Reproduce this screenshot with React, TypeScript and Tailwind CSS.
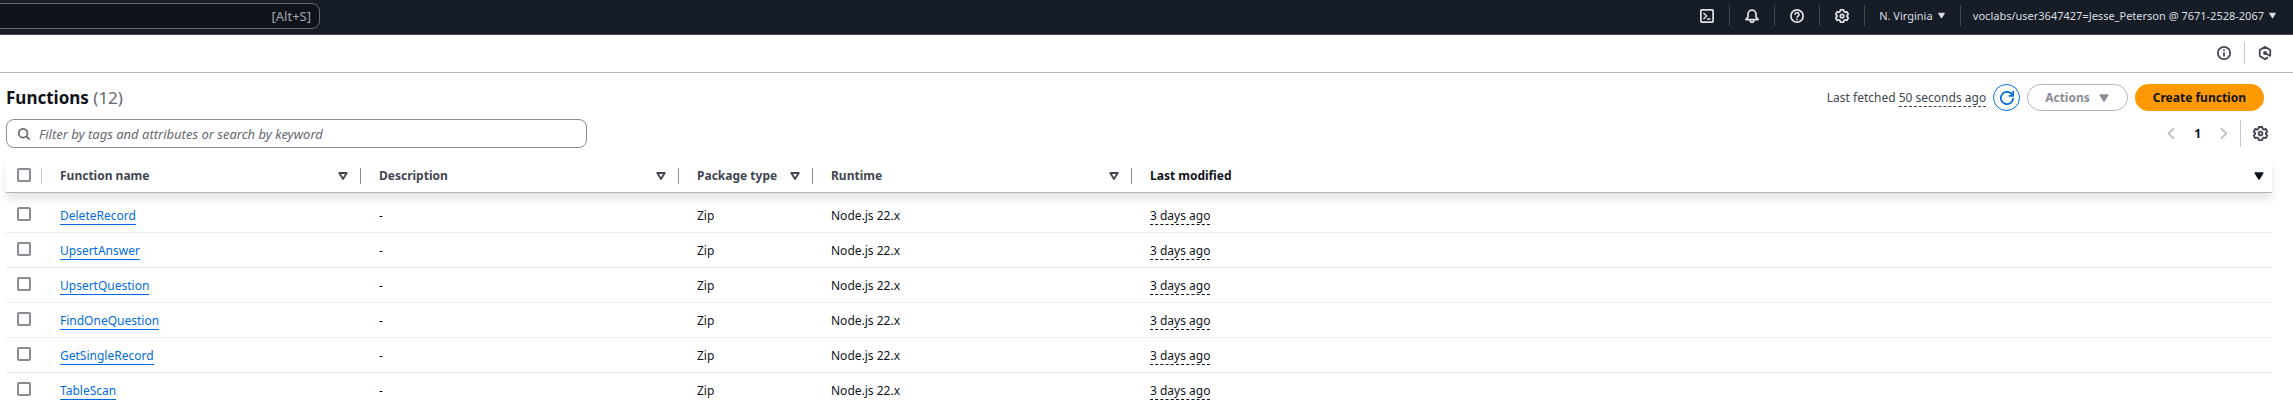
import React from "react";

type IconProps = { className?: string };

const iconBase = {
  viewBox: "0 0 16 16",
  fill: "none",
  stroke: "currentColor",
  strokeWidth: 2,
  "aria-hidden": true,
} as const;

function ShellIcon({ className }: IconProps) {
  return (
    <svg {...iconBase} className={className}>
      <rect x="1" y="1" width="14" height="14" rx="1" strokeLinejoin="round" />
      <path d="M4 4.5 7.5 8 4 11.5M8 11.5h4" strokeWidth="1.7" />
    </svg>
  );
}

function BellIcon({ className }: IconProps) {
  return (
    <svg {...iconBase} className={className}>
      <path d="M3.5 9V5.8a4.5 4.5 0 0 1 9 0V9L15 12H1L3.5 9Z" strokeLinejoin="round" />
      <path d="M6 12.5V13a2 2 0 0 0 4 0v-.5" />
    </svg>
  );
}

function HelpIcon({ className }: IconProps) {
  return (
    <svg {...iconBase} className={className}>
      <circle cx="8" cy="8" r="7" />
      <path d="M5.7 6.6A2.3 2.2 0 1 1 9 8.3c-.7.4-1 .8-1 1.7" strokeWidth="1.8" />
      <path d="M8 11v1.8" strokeWidth="1.8" />
    </svg>
  );
}

function GearIcon({ className }: IconProps) {
  return (
    <svg {...iconBase} className={className}>
      <path
        d="M6.2 1h3.6l.5 2 1.4.8 2-.6 1.5 2.9L13.8 7.4v1.3l1.4 1.3-1.5 2.9-2-.6-1.4.8-.5 1.9H6.2l-.5-1.9-1.4-.8-2 .6L.8 10l1.4-1.3V7.4L.8 6.1l1.5-2.9 2 .6L5.7 3l.5-2Z"
        strokeLinejoin="round"
      />
      <circle cx="8" cy="8" r="2" />
    </svg>
  );
}

function InfoIcon({ className }: IconProps) {
  return (
    <svg {...iconBase} className={className}>
      <circle cx="8" cy="8" r="7" />
      <path d="M8 7v5M8 4v1.8" />
    </svg>
  );
}

function HexIcon({ className }: IconProps) {
  return (
    <svg {...iconBase} className={className}>
      <path d="M11.5 13 8 15l-6-3.5v-7L8 1l6 3.5v7" strokeLinejoin="round" />
      <path d="m8 8 6.5 3.8" />
      <circle cx="8" cy="8" r="2.2" fill="currentColor" stroke="none" />
    </svg>
  );
}

function SearchIcon({ className }: IconProps) {
  return (
    <svg {...iconBase} className={className}>
      <circle cx="7" cy="7" r="5" />
      <path d="m10.5 10.5 4 4" />
    </svg>
  );
}

function RefreshIcon({ className }: IconProps) {
  return (
    <svg {...iconBase} className={className}>
      <path d="M15 8a7 7 0 1 1-2-4.9L15 5" />
      <path d="M15 0v5.6h-5" />
    </svg>
  );
}

function ChevronIcon({ className, left }: IconProps & { left?: boolean }) {
  return (
    <svg {...iconBase} className={className}>
      <path d={left ? "m11 1.5-6.5 6.5 6.5 6.5" : "m5 1.5 6.5 6.5-6.5 6.5"} />
    </svg>
  );
}

function CaretIcon({ className, outline }: IconProps & { outline?: boolean }) {
  return (
    <svg {...iconBase} className={className}>
      <path
        d="M3 4h10l-5 8-5-8Z"
        fill={outline ? "none" : "currentColor"}
        strokeWidth={outline ? 2.4 : 2}
        strokeLinejoin="round"
      />
    </svg>
  );
}

const topActions = [
  { label: "CloudShell", Icon: ShellIcon },
  { label: "Notifications", Icon: BellIcon },
  { label: "Support", Icon: HelpIcon },
  { label: "Settings", Icon: GearIcon },
];

const columns = [
  { label: "Function name", width: "w-[319px]" },
  { label: "Description", width: "w-[318px]" },
  { label: "Package type", width: "w-[134px]" },
  { label: "Runtime", width: "w-[319px]" },
  { label: "Last modified", width: "", sorted: true },
];

const functionNames = [
  "DeleteRecord",
  "UpsertAnswer",
  "UpsertQuestion",
  "FindOneQuestion",
  "GetSingleRecord",
  "TableScan",
];

function Checkbox({ label }: { label: string }) {
  return (
    <input
      type="checkbox"
      aria-label={label}
      className="block size-[14px] appearance-none rounded-[2px] border-2 border-[#8c8c94] bg-white checked:bg-[#006ce0]"
    />
  );
}

export default function App() {
  return (
    <div className="bg-white font-['Noto_Sans',sans-serif] text-[12px] leading-[18px] text-[#0f141a]">
      <header className="flex h-[35px] items-center justify-between border-b border-[#424650] bg-[#161d26] text-[11px] text-[#dedee3]">
        <label className="-ml-px mb-[2px] flex h-[26px] w-[321px] items-center rounded-r-[8px] border border-[#656871] bg-[#0f141a] pr-2">
          <input
            type="search"
            aria-label="Search"
            className="min-w-0 flex-1 bg-transparent outline-none"
          />
          <span className="text-[13px] text-[#a4a4ad]">[Alt+S]</span>
        </label>
        <nav className="mb-[3px] flex items-center pr-4">
          {topActions.map(({ label, Icon }) => (
            <button
              key={label}
              aria-label={label}
              className="flex h-[21px] w-[45px] items-center justify-center border-r border-[#424650]"
            >
              <Icon className="size-[14px]" />
            </button>
          ))}
          <button className="flex h-[21px] w-24 items-center justify-center gap-1 border-r border-[#424650]">
            N. Virginia
            <CaretIcon className="size-[9px]" />
          </button>
          <button className="flex h-[21px] items-center gap-1 pl-3">
            voclabs/user3647427=Jesse_Peterson @ 7671-2528-2067
            <CaretIcon className="size-[9px]" />
          </button>
        </nav>
      </header>

      <div className="flex h-[38px] items-center justify-end border-b border-[#b4b4bb] pr-[21px] pb-[2px] text-[#424650]">
        <button
          aria-label="Info"
          className="flex h-[22px] items-center border-r border-[#c6c6cd] pr-[13px]"
        >
          <InfoIcon className="size-[14px]" />
        </button>
        <button aria-label="Assistant" className="pl-[13px]">
          <HexIcon className="size-[14px]" />
        </button>
      </div>

      <main className="pr-[21px] pl-[6px]">
        <div className="flex items-center justify-between pt-[11px] pr-2">
          <h1 className="text-[17px] leading-[26px] font-bold">
            Functions <span className="font-normal text-[#656871]">(12)</span>
          </h1>
          <div className="flex items-center gap-[7px]">
            <p className="text-[#424650]">
              Last fetched{" "}
              <span className="border-b border-dashed border-[#424650]">50 seconds ago</span>
            </p>
            <button
              aria-label="Refresh"
              className="flex size-[27px] items-center justify-center rounded-full border border-[#006ce0] text-[#006ce0]"
            >
              <RefreshIcon className="size-[14px]" />
            </button>
            <button
              disabled
              className="flex h-[27px] items-center gap-2 rounded-full border border-[#b4b4bb] px-[17px] font-bold text-[#8c8c94]"
            >
              Actions
              <CaretIcon className="size-[12px]" />
            </button>
            <button className="h-[27px] rounded-full bg-[#ff9900] px-[18px] font-bold">
              Create function
            </button>
          </div>
        </div>

        <div className="flex items-center justify-between pt-2">
          <label className="flex h-[29px] w-[581px] items-center gap-2 rounded-[8px] border border-[#8c8c94] px-[10px]">
            <SearchIcon className="size-[14px] text-[#656871]" />
            <input
              type="search"
              aria-label="Filter functions"
              placeholder="Filter by tags and attributes or search by keyword"
              className="min-w-0 flex-1 bg-transparent text-[13px] outline-none placeholder:text-[#656871] placeholder:italic"
            />
          </label>
          <div className="flex items-center pr-1">
            <button aria-label="Previous page" disabled className="pr-2 text-[#b4b4bb]">
              <ChevronIcon left className="size-[13px]" />
            </button>
            <button aria-label="Page 1" className="px-2 font-bold">
              1
            </button>
            <button aria-label="Next page" disabled className="pr-[10px] pl-2 text-[#b4b4bb]">
              <ChevronIcon className="size-[13px]" />
            </button>
            <button
              aria-label="Preferences"
              className="flex h-[27px] items-center border-l border-[#c6c6cd] pl-3 text-[#424650]"
            >
              <GearIcon className="size-[15px]" />
            </button>
          </div>
        </div>

        <table className="mt-[10px] w-full table-fixed border-separate border-spacing-0 text-left">
          <thead className="relative shadow-[0_6px_8px_rgba(0,7,22,0.10)]">
            <tr className="h-[35px] *:border-b *:border-[#b4b4bb] *:bg-white *:p-0 *:pt-[2px]">
              <th className="w-9">
                <div className="flex h-4 items-center border-r border-[#c6c6cd] pb-[2px] pl-[11px]">
                  <Checkbox label="Select all functions" />
                </div>
              </th>
              {columns.map(({ label, width, sorted }) => (
                <th
                  key={label}
                  className={`font-bold ${width} ${sorted ? "text-[#0f141a]" : "text-[#424650]"}`}
                >
                  <div
                    className={`flex h-4 items-center justify-between pl-[18px] ${sorted ? "pr-[7px]" : "border-r border-[#8c8c94] pr-[11px]"}`}
                  >
                    {label}
                    <CaretIcon outline={!sorted} className="size-[12px]" />
                  </div>
                </th>
              ))}
            </tr>
          </thead>
          <tbody>
            <tr className="h-[5px]" aria-hidden="true" />
            {functionNames.map((name) => (
              <tr
                key={name}
                className="h-[35px] *:border-b *:border-[#ebebf0] *:p-0 *:pt-[2px] *:not-first:pl-[18px] last:*:border-transparent"
              >
                <td>
                  <div className="pb-1 pl-[11px]">
                    <Checkbox label={`Select ${name}`} />
                  </div>
                </td>
                <td>
                  <a href={`#${name}`} className="border-b border-[#006ce0] text-[#006ce0]">
                    {name}
                  </a>
                </td>
                <td>-</td>
                <td>Zip</td>
                <td>Node.js 22.x</td>
                <td>
                  <span className="border-b border-dashed border-[#0f141a]">3 days ago</span>
                </td>
              </tr>
            ))}
          </tbody>
        </table>
      </main>
    </div>
  );
}
